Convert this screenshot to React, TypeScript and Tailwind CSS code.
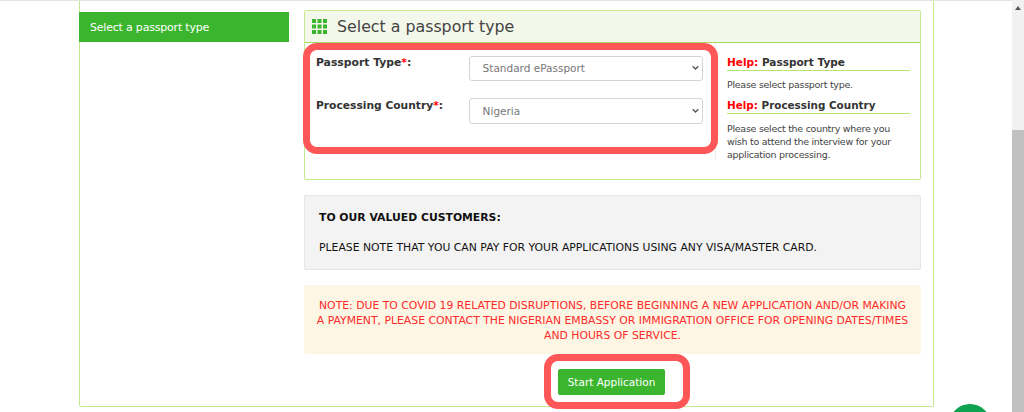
function Chevron() {
  return (
    <svg className="absolute right-[4px] top-1/2 -translate-y-1/2 pointer-events-none" width="7" height="5" viewBox="0 0 7 5" fill="none" stroke="#555" strokeWidth="1.4">
      <path d="M.7.8l2.8 2.8L6.3.8" />
    </svg>
  );
}

export default function App() {
  const font = "font-['DejaVu_Sans',sans-serif]";
  return (
    <div className={`h-[412px] w-[1024px] overflow-hidden flex bg-white relative ${font}`}>
      <main className="w-[1012px] h-[412px] flex flex-col">
        <div className="h-px bg-[#e4e4e4] shrink-0" />
        <div className="ml-[79px] w-[855px] h-[406px] border-x border-b border-[#c4e98c] rounded-b-[2px] flex pt-[11px] pl-0 pr-[12px] gap-[15px] shrink-0">
          <aside className="w-[209px] shrink-0">
            <div className="-ml-px h-[30px] bg-[#3cb52e] text-white text-[11px] tracking-[-0.2px] leading-[30px] pl-[11px] pt-[1px]">Select a passport type</div>
          </aside>
          <section className="flex-1 -mt-[2px]">
            <div className="h-[170px] border border-[#c4e98c] rounded-[2px] relative">
              <div className="h-[32px] bg-[#f4f8ea] border-b border-[#a4dc62] flex items-center pl-[7px] gap-[10px] text-[15.8px] text-[#444]">
                <svg width="15" height="15" viewBox="0 0 15 15" fill="#3cb52e">
                  {[0, 5.5, 11].map((y) => [0, 5.5, 11].map((x) => <rect key={`${x}-${y}`} x={x} y={y} width="4" height="4" />))}
                </svg>
                <span className="pt-[1px]">Select a passport type</span>
              </div>
              <div className="flex">
                <div className="w-[411px] h-[117px] pt-[12px] pl-[11px] pr-[12px] border-r border-[#eeeeee]">
                  <div className="flex h-[43px]">
                    <label className="w-[153px] pt-[1px] text-[10.8px] font-bold text-[#333] leading-[13px]">Passport Type<span className="text-[#ff0000]">*</span>:</label>
                    <div className="relative w-[235px] h-[25px]">
                      <select defaultValue="a" className="appearance-none w-full h-full border border-[#d4d4d4] rounded-[3px] pl-[13px] pt-[1px] text-[10.5px] text-[#777] bg-white">
                        <option value="a">Standard ePassport</option>
                      </select>
                      <Chevron />
                    </div>
                  </div>
                  <div className="flex">
                    <label className="w-[153px] pt-[1px] text-[10.7px] font-bold text-[#333] leading-[13px]">Processing Country<span className="text-[#ff0000]">*</span>:</label>
                    <div className="relative w-[235px] h-[26px]">
                      <select defaultValue="a" className="appearance-none w-full h-full border border-[#d4d4d4] rounded-[3px] pl-[13px] pt-[1px] text-[10.5px] text-[#777] bg-white">
                        <option value="a">Nigeria</option>
                      </select>
                      <Chevron />
                    </div>
                  </div>
                </div>
                <div className="w-[194px] pl-[11px] pt-[13px] text-[#444]">
                  <div className="text-[10.5px] font-bold leading-[13px] text-[#333] pb-[1px] border-b border-[#b5e56f]"><span className="text-[#ff0000]">Help:</span> Passport Type</div>
                  <p className="text-[9.5px] tracking-[-0.28px] leading-[13px] mt-[7px]">Please select passport type.</p>
                  <div className="text-[10.4px] font-bold leading-[13px] text-[#333] pb-[1px] border-b border-[#b5e56f] mt-[8px]"><span className="text-[#ff0000]">Help:</span> Processing Country</div>
                  <p className="text-[9.5px] tracking-[-0.28px] leading-[13px] mt-[8px] pr-[14px]">Please select the country where you wish to attend the interview for your application processing.</p>
                </div>
              </div>
              <div className="absolute left-[-2px] top-[32px] w-[415px] h-[111px] border-[7px] border-[#ff5757] rounded-[14px]" />
            </div>
            <div className="mt-[15px] h-[75px] bg-[#f3f3f3] border border-[#e6e6e6] rounded-[2px] px-[14px] pt-[15px] text-[#111] text-[10.83px] leading-[14px]">
              <p className="font-bold">TO OUR VALUED CUSTOMERS:</p>
              <p className="mt-[16px]">PLEASE NOTE THAT YOU CAN PAY FOR YOUR APPLICATIONS USING ANY VISA/MASTER CARD.</p>
            </div>
            <div className="mt-[15px] h-[69px] bg-[#fdf6e4] rounded-[2px] px-[10px] pt-[13px] text-center text-[#ff2a2a] text-[10.83px] leading-[15px]">
              NOTE: DUE TO COVID 19 RELATED DISRUPTIONS, BEFORE BEGINNING A NEW APPLICATION AND/OR MAKING A PAYMENT, PLEASE CONTACT THE NIGERIAN EMBASSY OR IMMIGRATION OFFICE FOR OPENING DATES/TIMES AND HOURS OF SERVICE.
            </div>
            <div className="flex justify-center mt-[15px]">
              <div className="relative -translate-x-px">
                <button className="block w-[107px] h-[26px] pt-[1px] bg-[#3cb52e] text-white text-[10.5px] rounded-[2px]">Start Application</button>
                <div className="absolute -left-[14px] -top-[15px] w-[146px] h-[55px] border-[7px] border-[#ff5757] rounded-[14px]" />
              </div>
            </div>
          </section>
        </div>
      </main>
      <div className="w-[12px] h-[412px] bg-[#f1f1f1] flex flex-col items-center shrink-0">
        <div className="h-[130px] w-full flex justify-center pt-[6px]">
          <svg width="6" height="4" viewBox="0 0 6 4" fill="#555"><path d="M3 0 6 4H0z" /></svg>
        </div>
        <div className="flex-1 w-full bg-[#c1c1c1]" />
      </div>
      <div className="absolute left-[949px] top-[404px] w-[42px] h-[42px] rounded-full bg-[#0da34e]" />
    </div>
  );
}
